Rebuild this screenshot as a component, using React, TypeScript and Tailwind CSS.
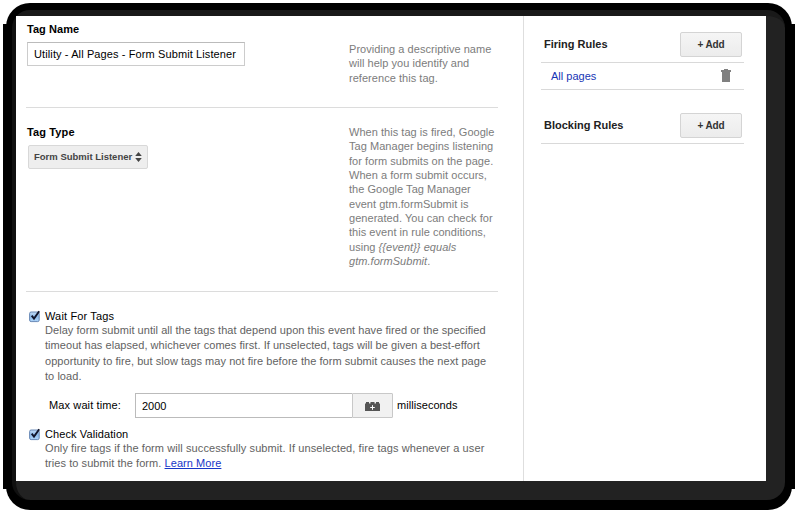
import type { ReactNode } from "react";

function Check() {
  return (
    <svg className="mr-[4px] h-[14px] w-[12px] shrink-0" viewBox="0 0 12 14">
      <defs>
        <linearGradient id="box" x1="0" y1="0" x2="0" y2="1">
          <stop offset="0" stopColor="#c4dcf5" />
          <stop offset="0.5" stopColor="#8fbbea" />
          <stop offset="1" stopColor="#b0d6fa" />
        </linearGradient>
      </defs>
      <rect x="0.6" y="3" width="9.6" height="9.6" rx="1.5" fill="url(#box)" stroke="#5b7eae" strokeWidth="0.9" />
      <path d="M2.7 6.6 L5 9.6 L10.2 2.2" fill="none" stroke="#10142a" strokeWidth="1.9" />
    </svg>
  );
}

function AddButton() {
  return (
    <button className="mr-[2px] h-[25px] w-[62px] rounded-[2px] border border-[#d4d4d4] bg-linear-to-b from-[#f5f5f5] to-[#ececec] text-[10px] leading-[22px] font-bold tracking-[-0.1px] text-[#333]">
      + Add
    </button>
  );
}

function RuleHeader({ children }: { children: ReactNode }) {
  return (
    <div className="flex h-[31px] items-start justify-between border-b border-[#d9d9d9] pl-[3px]">
      <h2 className="text-[11px] leading-[25px] font-bold text-[#222]">{children}</h2>
      <AddButton />
    </div>
  );
}

const helpLines = [
  "When this tag is fired, Google",
  "Tag Manager begins listening",
  "for form submits on the page.",
  "When a form submit occurs,",
  "the Google Tag Manager",
  "event gtm.formSubmit is",
  "generated. You can check for",
  "this event in rule conditions,",
];

export default function App() {
  return (
    <div className="relative h-[513px] w-[798px] overflow-hidden bg-white font-['Liberation_Sans',Arial,sans-serif] whitespace-nowrap">
      <div className="absolute inset-x-[6px] top-[3px] h-[507px] rounded-[24px] bg-black" />
      <div className="absolute inset-x-[3px] top-[24px] h-[465px] bg-black" />
      <div className="absolute top-[10px] left-[12px] h-[490px] w-[773px] rounded-[18px] border-t-[6px] border-l-[4px] border-t-[#191919] border-l-[#101010] bg-[#222]" />
      <div className="relative ml-[16px] flex h-[481px] w-[750px] pt-[16px]">
        <main className="w-[508px] border-r border-[#dedede] bg-white pl-[10px]">
          <section className="flex h-[92px] w-[472px] justify-between border-b border-[#dcdcdc]">
            <div className="pt-[6px]">
              <h1 className="pl-px text-[11px] leading-[14px] font-bold tracking-[0.05px] text-black">Tag Name</h1>
              <div className="mt-[6px] ml-[1px] h-[24px] w-[218px] border border-[#ccc] border-t-[#bbb] pl-[6px] text-[11px] leading-[23px] tracking-[0.11px] text-black">
                Utility - All Pages - Form Submit Listener
              </div>
            </div>
            <p className="w-[149px] pt-[26px] text-[11px] leading-[14.33px] tracking-[0.04px] text-[#7c7c7c]">
              Providing a descriptive name<br />will help you identify and<br />reference this tag.
            </p>
          </section>
          <section className="flex h-[184px] w-[472px] justify-between border-b border-[#dcdcdc]">
            <div className="pt-[17px]">
              <h1 className="pl-px text-[11px] leading-[14px] font-bold tracking-[0.12px] text-black">Tag Type</h1>
              <div className="mt-[6px] ml-[2px] flex h-[24px] w-[120px] items-center rounded-[2px] border border-[#d8d8d8] bg-[#eeeeee] pl-[5px] text-[9.5px] font-bold text-[#444]">
                <span className="w-[101px]">Form Submit Listener</span>
                <svg className="h-[10px] w-[7px]" viewBox="0 0 7 10">
                  <path d="M0.2 4 L3.5 0.1 L6.8 4Z M0.2 6 L3.5 9.9 L6.8 6Z" fill="#444" />
                </svg>
              </div>
            </div>
            <p className="w-[149px] pt-[17px] text-[11px] leading-[14.33px] tracking-[0.04px] text-[#7c7c7c]">
              {helpLines.map((line) => <span key={line} className="block">{line}</span>)}
              using <i>{"{{event}} equals"}</i><br /><i>gtm.formSubmit</i>.
            </p>
          </section>
          <section className="pt-[17px] pl-[3px] text-[11px]">
            <div className="flex h-[14px] leading-[14px] text-black">
              <Check /><span className="tracking-[0.15px]">Wait For Tags</span>
            </div>
            <p className="pl-[16px] leading-[15.25px] tracking-[0.05px] text-[#626262]">
              Delay form submit until all the tags that depend upon this event have fired or the specified<br />
              timeout has elapsed, whichever comes first. If unselected, tags will be given a best-effort<br />
              opportunity to fire, but slow tags may not fire before the form submit causes the next page<br />
              to load.
            </p>
            <div className="mt-[9px] flex h-[25px] pl-[20px] leading-[25px] text-black">
              <span className="w-[86px] tracking-[0.12px]">Max wait time:</span>
              <span className="w-[217px] border border-r-0 border-[#bbb] pl-[6px] leading-[24px]">2000</span>
              <span className="flex w-[41px] items-center justify-center rounded-r-[1px] border border-[#c8c8c8] bg-[#f1f1f1]">
                <svg className="mt-px h-[9px] w-[15px]" viewBox="0 0 15 9">
                  <path d="M0 1.5H1V0H4V1.5H5.5V0H9.5V1.5H11V0H14V1.5H15V9H0Z" fill="#555" />
                  <path d="M7.5 3.2V7.8 M5.2 5.5H9.8" stroke="#fff" />
                </svg>
              </span>
              <span className="pl-[4px] leading-[24px] tracking-[0.05px]">milliseconds</span>
            </div>
            <div className="mt-[9px] flex h-[14px] leading-[14px] text-black">
              <Check /><span className="tracking-[0.1px]">Check Validation</span>
            </div>
            <p className="pl-[16px] leading-[15.25px] tracking-[0.09px] text-[#626262]">
              Only fire tags if the form will successfully submit. If unselected, fire tags whenever a user<br />
              <span className="tracking-[0.06px]">tries to submit the form. <a className="text-[#1735c8] underline">Learn More</a></span>
            </p>
          </section>
        </main>
        <aside className="w-[242px] bg-white pt-[16px] pr-[22px] pl-[17px]">
          <RuleHeader>Firing Rules</RuleHeader>
          <div className="flex h-[27px] items-center justify-between border-b border-[#d9d9d9] pr-[13px] pl-[10px] text-[11px] leading-[14px] text-[#1735b5]">
            <a className="mb-px">All pages</a>
            <svg className="mb-[2px] h-[13px] w-[10px]" viewBox="0 0 10 13">
              <path d="M0 1H3V0H7V1H10V3H0Z M1 3H9V13H1Z" fill="#808080" />
            </svg>
          </div>
          <div className="mt-[23px]"><RuleHeader>Blocking Rules</RuleHeader></div>
        </aside>
      </div>
    </div>
  );
}
